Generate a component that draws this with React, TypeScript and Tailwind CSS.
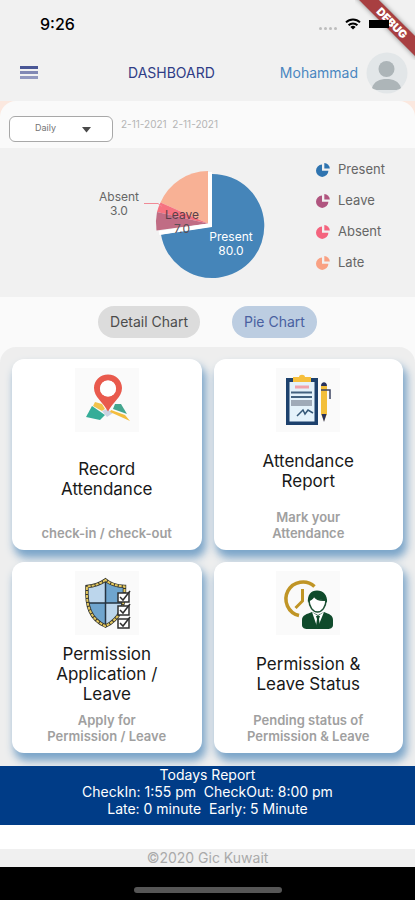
import type { ReactNode } from "react";

const legend = [
  { label: "Present", color: "#2f74b0" },
  { label: "Leave", color: "#b0557f" },
  { label: "Absent", color: "#f4647e" },
  { label: "Late", color: "#f9a183" },
];

function StatusBar() {
  return (
    <div className="flex h-11 items-center justify-between pl-10 pr-6 pt-1">
      <span className="text-base font-medium text-black">9:26</span>
      <div className="flex items-center gap-2 pr-[2px]">
        <div className="flex gap-[2px] pt-2">
          <i className="h-[3px] w-[3px] rounded-full bg-[#bdbdbd]" />
          <i className="h-[3px] w-[3px] rounded-full bg-[#bdbdbd]" />
          <i className="h-[3px] w-[3px] rounded-full bg-[#bdbdbd]" />
          <i className="h-[3px] w-[3px] rounded-full bg-[#bdbdbd]" />
        </div>
        <svg width="16" height="12" viewBox="0 0 16 12" fill="none" stroke="#000" strokeWidth="2">
          <path d="M1 4.4a10 10 0 0 1 14 0" />
          <path d="M3.6 7.2a6.3 6.3 0 0 1 8.8 0" />
          <path d="M8 11.6 5.4 9a3.8 3.8 0 0 1 5.2 0z" fill="#000" stroke="none" />
        </svg>
        <span className="relative z-20 h-2 w-5 bg-black" />
      </div>
    </div>
  );
}

function DebugBanner() {
  return (
    <div className="pointer-events-none absolute right-0 top-0 z-10 h-[60px] w-[60px] overflow-hidden">
      <div className="absolute left-[-23px] top-4 flex h-[14px] w-[120px] rotate-45 items-center justify-center bg-[#a83f41] text-[11px] font-black leading-none text-white shadow-[0_0_5px_rgba(0,0,0,0.45)]">
        DEBUG
      </div>
    </div>
  );
}

function Header() {
  return (
    <header className="flex h-[57px] items-center pl-5 pr-[7px]">
      <button type="button" aria-label="Menu">
        <svg width="18" height="13" viewBox="0 0 18 13" strokeWidth="3">
          <path d="M0 1.500h18" stroke="#4a5796" />
          <path d="M0 6.500h18" stroke="#8188b4" />
          <path d="M0 11.500h18" stroke="#9298bf" />
        </svg>
      </button>
      <h1 className="ml-[90px] text-sm text-[#2f3c86]">DASHBOARD</h1>
      <div className="ml-auto flex items-center gap-2">
        <span className="text-sm text-[#4a86c0]">Mohammad</span>
        <svg width="42" height="42" viewBox="0 0 42 42" role="img" aria-label="Profile">
          <circle cx="21" cy="21" r="20.5" fill="#e2e6e8" />
          <circle cx="20.500" cy="17" r="8" fill="#adb5b8" />
          <path d="M6 36c2-7 8-9 14.500-9S33 29 35 36c-2 1.500-4 2-6 2H12c-2 0-4-.5-6-2z" fill="#adb5b8" />
        </svg>
      </div>
    </header>
  );
}

function Filters() {
  return (
    <div className="flex h-[47px] items-center gap-2 rounded-t-2xl bg-[#fafafa] pl-[9px] pt-[6px]">
      <div className="relative">
        <select
          aria-label="Period"
          defaultValue="Daily"
          className="h-[26px] w-[104px] appearance-none rounded-md border border-[#a8a8a8] bg-white pb-[2px] pl-[25px] text-[9px] text-[#757575]"
        >
          <option>Daily</option>
          <option>Weekly</option>
          <option>Monthly</option>
        </select>
        <svg className="pointer-events-none absolute right-[22px] top-[14px]" width="9" height="6" viewBox="0 0 9 6">
          <path d="M0 0h9L4.500 5.500z" fill="#4a4a4a" />
        </svg>
      </div>
      <span className="whitespace-pre pb-[6px] text-[10px] text-[#b4b4b4]">2-11-2021  2-11-2021</span>
    </div>
  );
}

function PieChart() {
  return (
    <svg width="180" height="120" viewBox="90 165 180 120" role="img" aria-label="Attendance pie chart">
      <path d="M208 223.500V171a52 52 0 0 0-47.500 31.500z" fill="#f8b195" />
      <path d="M208 223.500 160.500 202.500a52 52 0 0 0-3.500 9.500z" fill="#f67280" />
      <path d="M208 223.500 157 212a52 52 0 0 0-.5 18.500z" fill="#c06c84" />
      <path d="M212 226.500V174a52 52 0 1 1-51 60.500z" fill="#4585b9" />
      <path d="M210 172v53.200L159 233" fill="none" stroke="#fff" strokeWidth="4" />
      <path d="M144 203.500h14l4 3" stroke="#f08a96" fill="none" />
      <g fontSize="12" textAnchor="middle">
        <text x="119" y="201" fill="#666">Absent</text>
        <text x="119" y="215" fill="#666">3.0</text>
        <text x="182" y="219" fill="#5c3f48">Leave</text>
        <text x="182" y="233" fill="#5c4f55">7.0</text>
        <text x="231" y="241" fill="#fff">Present</text>
        <text x="231" y="255" fill="#fff">80.0</text>
      </g>
    </svg>
  );
}

function ChartPanel() {
  return (
    <section className="flex h-[149px] justify-between bg-[#f1f1f1] pl-[90px] pr-[29px] pt-[6px]">
      <div className="pt-[11px]">
        <PieChart />
      </div>
      <ul className="flex w-[70px] flex-col">
        {legend.map((item) => (
          <li key={item.label} className="flex h-[31px] items-center gap-2 text-[13px] text-[#666]">
            <svg width="14" height="14" viewBox="0 0 14 14" fill={item.color} className="shrink-0">
              <path d="M6 1.500v6.300h6.400A6.200 6.200 0 1 1 6 1.500z" />
              <path d="M8.300 0A5.600 5.600 0 0 1 13.800 5.500H8.300z" />
            </svg>
            {item.label}
          </li>
        ))}
      </ul>
    </section>
  );
}

function MapPin() {
  return (
    <svg width="64" height="64" viewBox="0 0 64 64">
      <path d="m17 38 13 9-5 5-14-3z" fill="#35ad98" />
      <path d="m20 34 7 2 3 5-3 2-9-5z" fill="#f3c24b" />
      <path d="m27 43 5-2 6 4-6 4z" fill="#ccd3e2" />
      <path d="m40 36 6 0 6 10-14-5z" fill="#44a68f" />
      <path d="m36 42 14 5 5 6-20-9z" fill="#f3bd3d" />
      <path fillRule="evenodd" d="M33 6.500c8 0 14 6 14 13.500 0 9-9 14-14 23.500C28 34 19 29 19 20c0-7.500 6-13.500 14-13.500zm0 6a8 8 0 1 0 0 16 8 8 0 0 0 0-16z" fill="#e95a4d" />
      <circle cx="33" cy="20.500" r="8" fill="#fff" />
    </svg>
  );
}

function Clipboard() {
  return (
    <svg width="64" height="64" viewBox="0 0 64 64">
      <path d="M10 10h32v47H10z" fill="#1d416d" />
      <path d="M13.500 14h25v39.500h-25z" fill="#e4f2fb" />
      <path d="M17 14v-5h6c0-3 6-3 6 0h6v5z" fill="#f6bf3c" />
      <path d="M19 19h14" stroke="#f0a3ac" strokeWidth="3" />
      <path d="M15 24.500h21M15 29h21" stroke="#42617f" strokeWidth="2" />
      <path d="M15 35h21" stroke="#9faab8" strokeWidth="6" />
      <path d="m21 48 6-6 2 4 3-4 5 3" stroke="#355878" strokeWidth="1.500" fill="none" />
      <path d="M45 18h6v28l-3 7-3-7z" fill="#f3bf3a" />
      <path d="M45 18c0-5 6-5 6 0zM45.500 46h5L48 54z" fill="#29325c" />
      <path d="M45 22h9v9" stroke="#3d4461" strokeWidth="1.500" fill="none" />
    </svg>
  );
}

function Shield() {
  return (
    <svg width="64" height="64" viewBox="0 0 64 64">
      <path d="M30.500 9C25 13 18 15 12 15.500 11 35 15 48 30.500 55 45 48 50 35 49.500 15.500 42 15 35 13 30.500 9z" fill="#6fa5ce" />
      <path d="M30.500 9C25 13 18 15 12 15.500L13 32h17.500zM30.500 32H49c-2 11-8 18-18.500 23z" fill="#bcd6ec" />
      <path d="M30.500 9v46M13 32h36" stroke="#263441" strokeWidth="1.500" />
      <path d="M30.500 9C25 13 18 15 12 15.500 11 35 15 48 30.500 55 45 48 50 35 49.500 15.500 42 15 35 13 30.500 9z" fill="none" stroke="#34352f" strokeWidth="3.500" />
      <path d="M30.500 9C25 13 18 15 12 15.500 11 35 15 48 30.500 55 45 48 50 35 49.500 15.500 42 15 35 13 30.500 9z" fill="none" stroke="#e3c75d" strokeWidth="2" strokeDasharray="3 1" />
      <g fill="#fff" stroke="#303030" strokeWidth="1.500">
        <path d="M43 22h11v9H43zM43 35h11v9H43zM43 48h11v9H43z" />
        <path d="m45 26 3 3 7-9M45 39l3 3 7-9M45 52l3 3 7-9" fill="none" />
      </g>
    </svg>
  );
}

function ClockPerson() {
  return (
    <svg width="64" height="64" viewBox="0 0 64 64">
      <path d="M38.500 15.500A17 17 0 1 0 23 44.500" stroke="#c09526" strokeWidth="3.500" fill="none" />
      <path d="M26.500 18v12l-7 7" stroke="#c09526" strokeWidth="3" fill="none" />
      <path d="M33 29c0 7 4 12 8.500 12S50 36 50 29c-7 1-10-1-12-4-1 2-3 4-5 4z" fill="#fff" stroke="#1d5034" strokeWidth="1.500" />
      <path d="M32 32c-1-8 3-12.500 9-12.500S52 24 51 32l-2-3c-6 0-9-1-11-4-1 3-3 4-5 5z" fill="#0f4a2b" />
      <path d="M26 54v-5c0-5 5-6 10-8l6 3 6-3c5 2 9 3 9 8v5c0 3-3 4-5 4H31c-2 0-5-1-5-4z" fill="#0f4a2b" />
      <path d="m36 41 5.500 16L48 41l-6 4z" fill="#fff" />
      <path d="M40 45h4l-1 3 1 7-2 3-2-3 1-7z" fill="#0f4a2b" />
    </svg>
  );
}

function Card({ icon, title, note }: { icon: ReactNode; title: string; note: string }) {
  return (
    <button
      type="button"
      className="flex min-h-[191px] flex-col items-center justify-between rounded-xl bg-white py-[9px] text-center shadow-[3px_7px_9px_1px_#7ba5c9]"
    >
      <span className="bg-[#fafafa]">{icon}</span>
      <span className="whitespace-pre-line text-[17px] leading-5 text-[#181818]">{title}</span>
      <span className="whitespace-pre-line text-[13px] font-semibold leading-4 text-[#a0a0a0]">{note}</span>
    </button>
  );
}

export default function App() {
  return (
    <div className="relative flex min-h-screen flex-col bg-[#f1f1f1] font-['Inter','Liberation_Sans',sans-serif]">
      <DebugBanner />
      <StatusBar />
      <Header />
      <main className="bg-[#fbe8df]">
        <Filters />
        <ChartPanel />
        <div className="bg-[#fafafa]">
          <div className="flex h-[50px] items-center justify-center gap-8">
            <button type="button" className="h-8 rounded-full bg-[#dcdcdc] px-3 text-sm text-[#4c4c4c]">
              Detail Chart
            </button>
            <button type="button" className="h-8 rounded-full bg-[#bccde1] px-3 text-sm text-[#4960a0]">
              Pie Chart
            </button>
          </div>
          <section className="grid grid-cols-2 gap-3 overflow-hidden rounded-t-2xl bg-[#eeeeee] px-3 pb-[13px] pt-3">
            <Card icon={<MapPin />} title={"Record\nAttendance"} note="check-in / check-out" />
            <Card icon={<Clipboard />} title={"Attendance\nReport"} note={"Mark your\nAttendance"} />
            <Card icon={<Shield />} title={"Permission\nApplication /\nLeave"} note={"Apply for\nPermission / Leave"} />
            <Card icon={<ClockPerson />} title={"Permission &\nLeave Status"} note={"Pending status of\nPermission & Leave"} />
          </section>
        </div>
      </main>
      <section className="bg-[#003c87] pb-2 text-center text-sm leading-[17px] text-white">
        <p>Todays Report</p>
        <p className="whitespace-pre">CheckIn: 1:55 pm  CheckOut: 8:00 pm</p>
        <p className="whitespace-pre">Late: 0 minute  Early: 5 Minute</p>
      </section>
      <footer className="flex grow flex-col bg-white pt-6">
        <p className="bg-[#f0f0f0] text-center text-sm leading-[18px] text-[#aaaaaa]">©2020 Gic Kuwait</p>
        <div className="flex grow items-center justify-center bg-black pt-3">
          <div className="h-[6px] w-[148px] rounded-full bg-[#565656]" />
        </div>
      </footer>
    </div>
  );
}
